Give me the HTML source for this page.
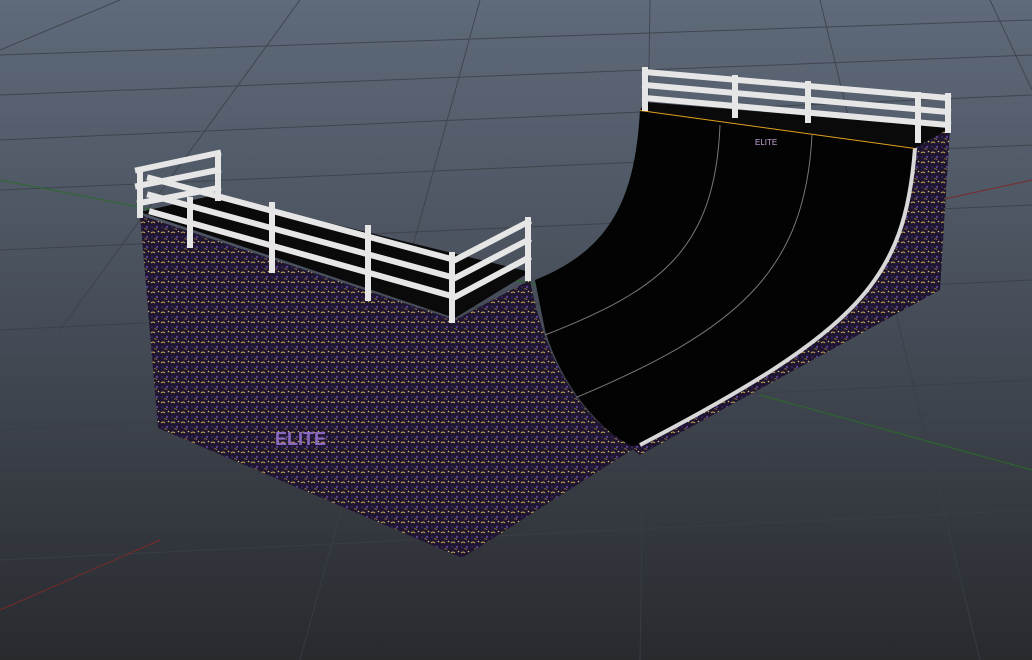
<!DOCTYPE html>
<html><head><meta charset="utf-8"><style>
html,body{margin:0;padding:0;width:1032px;height:660px;overflow:hidden;background:#3a4048}
svg{display:block}
</style></head><body>
<svg width="1032" height="660" viewBox="0 0 1032 660" xmlns="http://www.w3.org/2000/svg">
<defs>
<linearGradient id="bg" x1="0" y1="0" x2="0" y2="1">
<stop offset="0" stop-color="#5f6a7a"/><stop offset="0.4" stop-color="#4a525e"/><stop offset="1" stop-color="#282a2e"/>
</linearGradient>
<pattern id="pat" width="10" height="10" patternUnits="userSpaceOnUse">
<rect width="10" height="10" fill="#1e1630"/>
<path d="M1,3 q2,-2 4,0" stroke="#c9a650" stroke-width="1" fill="none"/>
<circle cx="7" cy="7" r="1.2" fill="#5a3f90"/>
<path d="M4,9 q2,-1 3,1" stroke="#8a7040" stroke-width="0.9" fill="none"/>
<circle cx="8.5" cy="1.5" r="0.8" fill="#e0c070"/>
<circle cx="2" cy="7" r="0.9" fill="#3f2a66"/>
</pattern>
</defs>
<rect width="1032" height="660" fill="url(#bg)"/>
<g stroke="#3a3f46" stroke-width="1" fill="none" opacity="0.8">
<path d="M0,55 L1032,20 M0,95 L1032,55 M0,140 L1032,95 M0,190 L1032,145 M0,250 L1032,205 M0,330 L1032,280 M0,430 L1032,380 M0,560 L1032,510"/>
<path d="M120,0 L0,50 M300,0 L60,330 M480,0 L300,660 M650,0 L640,660 M820,0 L980,660 M990,0 L1032,90"/>
</g>
<path d="M0,180 L540,285" stroke="#2a6a2a" stroke-width="1"/>
<path d="M760,395 L1032,470" stroke="#2a6a2a" stroke-width="1"/>
<path d="M0,610 L160,540" stroke="#7a2a2a" stroke-width="1"/>
<path d="M940,200 L1032,180" stroke="#7a2a2a" stroke-width="1"/>
<path d="M912,148 L950,128 L940,290 L640,455 L628,446 C760,380 890,320 912,148 Z" fill="url(#pat)"/>
<path d="M640,110 L915,148 C905,280 860,330 640,445 L628,446 C590,420 560,380 545,330 L535,280 C610,250 635,200 640,110 Z" fill="#030303"/>
<path d="M915,148 C905,280 860,330 640,445" stroke="#d8d8d8" stroke-width="4" fill="none"/>
<path d="M720,125 C715,250 660,290 545,335" stroke="#777" stroke-width="1" fill="none"/>
<path d="M812,135 C805,270 740,330 570,400" stroke="#777" stroke-width="1" fill="none"/>
<path d="M640,110 L915,148" stroke="#e0a020" stroke-width="2"/>
<path d="M645,102 L920,125 L950,128 L915,148 L640,110 Z" fill="#0a0a0a"/>
<text x="755" y="145" fill="#c8a8e0" font-family="Liberation Sans, sans-serif" font-size="8">ELITE</text>
<path d="M140,215 L455,320 L462,558 L158,428 Z" fill="url(#pat)"/>
<path d="M455,320 L530,280 C545,360 580,420 635,448 L462,558 Z" fill="url(#pat)"/>
<path d="M140,212 L215,195 L530,272 L455,318 Z" fill="#0a0a0a"/>
<text x="275" y="445" fill="#8a6ac0" font-family="Liberation Sans, sans-serif" font-size="18" font-weight="bold">ELITE</text>
<g stroke="#e6e6e6" stroke-width="6" fill="none" stroke-linecap="square">
<path d="M138,170 L218,153 M138,186 L218,170 M140,203 L218,188"/>
<path d="M140,172 L140,215 M218,155 L218,198"/>
<path d="M150,178 L455,260 L528,222 M150,195 L455,278 L528,240 M152,212 L455,297 L528,258"/>
<path d="M190,200 L190,245 M272,205 L272,270 M368,228 L368,298 M452,255 L452,320 M528,220 L528,278"/>
<path d="M645,72 L948,98 M645,85 L948,112 M645,98 L948,125"/>
<path d="M645,70 L645,108 M735,78 L735,115 M808,84 L808,120 M918,95 L918,140 M948,96 L948,130"/>
</g>
</svg>
</body></html>
